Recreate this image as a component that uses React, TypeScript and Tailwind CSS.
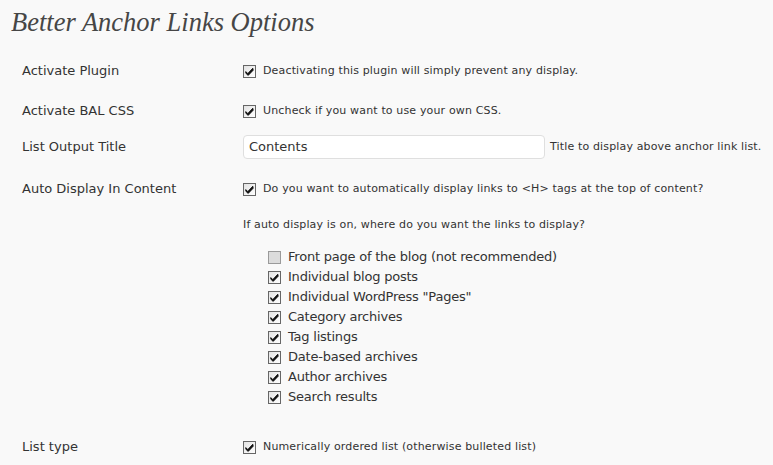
import React from "react";

function Box({ checked = true }: { checked?: boolean }) {
  return (
    <svg width="13" height="13" viewBox="0 0 13 13" className="shrink-0">
      <defs>
        <linearGradient id="cbg" x1="0" y1="0" x2="1" y2="1">
          <stop offset="0" stopColor="#e2e2e2" />
          <stop offset="1" stopColor="#ffffff" />
        </linearGradient>
      </defs>
      <rect x="0.5" y="0.5" width="12" height="12" fill={checked ? "url(#cbg)" : "#dcdcdc"} stroke={checked ? "#666666" : "#9a9a9a"} />
      {checked && (
        <path d="M2.8 6.6 L4.8 8.6 L9.8 3.2 L10.2 5.2 L5.2 10.4 L2.8 8.2 Z" fill="#111" stroke="#111" strokeWidth="0.9" strokeLinejoin="round" />
      )}
    </svg>
  );
}

const items: [string, boolean][] = [
  ["Front page of the blog (not recommended)", false],
  ["Individual blog posts", true],
  ["Individual WordPress \"Pages\"", true],
  ["Category archives", true],
  ["Tag listings", true],
  ["Date-based archives", true],
  ["Author archives", true],
  ["Search results", true],
];

export default function App() {
  const font = { fontFamily: '"DejaVu Sans", Verdana, sans-serif' };
  return (
    <div className="w-[773px] h-[465px] bg-[#f9f9f9] text-[#333] overflow-hidden" style={font}>
      <h2
        className="h-[51px] pl-[11px] pt-[6px] text-[26.5px] leading-[32px] italic text-[#464646]"
        style={{ fontFamily: '"Liberation Serif", Georgia, serif', fontWeight: 400 }}
      >
        Better Anchor Links Options
      </h2>
      <div className="flex h-[40px] items-center">
        <div className="w-[243px] pl-[22px] text-[13px]">Activate Plugin</div>
        <div className="flex items-center gap-[7px] text-[11px] tracking-[0.15px]">
          <Box />
          <span>Deactivating this plugin will simply prevent any display.</span>
        </div>
      </div>
      <div className="flex h-[40px] items-center">
        <div className="w-[243px] pl-[22px] text-[13px]">Activate BAL CSS</div>
        <div className="flex items-center gap-[7px] text-[11px] tracking-[0.15px]">
          <Box />
          <span>Uncheck if you want to use your own CSS.</span>
        </div>
      </div>
      <div className="flex h-[32px] items-center">
        <div className="w-[243px] pl-[22px] text-[13px]">List Output Title</div>
        <div className="flex items-center gap-[5px] text-[11px] tracking-[0.15px]">
          <div className="w-[302px] h-[24px] bg-white border border-[#dfdfdf] rounded-[4px] px-[5px] flex items-center text-[13px] tracking-normal text-[#333]">
            Contents
          </div>
          <span>Title to display above anchor link list.</span>
        </div>
      </div>
      <div className="flex pt-[16px]">
        <div className="w-[243px] pl-[22px] text-[13px] leading-[20px]">Auto Display In Content</div>
        <div className="flex flex-col">
          <div className="flex items-center gap-[7px] text-[11px] tracking-[0.15px] h-[20px]">
            <Box />
            <span>Do you want to automatically display links to &lt;H&gt; tags at the top of content?</span>
          </div>
          <div className="text-[11px] tracking-[0.15px] h-[20px] mt-[16px] flex items-center">
            If auto display is on, where do you want the links to display?
          </div>
          <div className="flex flex-col mt-[12px] pl-[25px]">
            {items.map(([t, c]) => (
              <div key={t} className="flex items-center gap-[7px] h-[20px] text-[13px] tracking-[-0.22px]">
                <Box checked={c} />
                <span>{t}</span>
              </div>
            ))}
          </div>
        </div>
      </div>
      <div className="flex h-[20px] items-center mt-[30px]">
        <div className="w-[243px] pl-[22px] text-[13px]">List type</div>
        <div className="flex items-center gap-[7px] text-[11px] tracking-[0.15px]">
          <Box />
          <span>Numerically ordered list (otherwise bulleted list)</span>
        </div>
      </div>
    </div>
  );
}
